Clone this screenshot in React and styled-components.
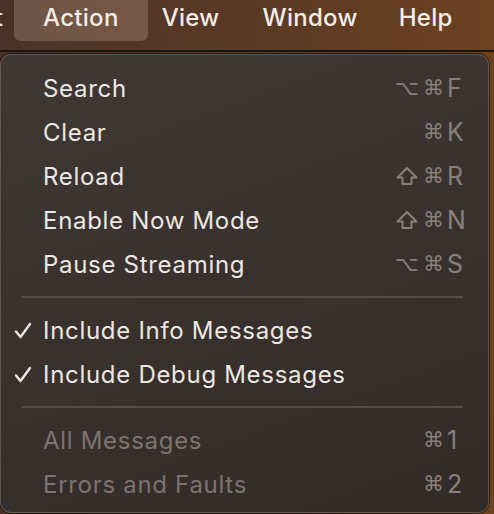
import styled, { createGlobalStyle } from "styled-components";

const GlobalStyle = createGlobalStyle`
  html, body {
    margin: 0;
    padding: 0;
  }
  body {
    width: 494px;
    height: 514px;
    overflow: hidden;
    background: linear-gradient(90deg, #4a3326 0%, #5a3a25 50%, #6d4221 100%);
    font-family: Inter, "Noto Sans", "Liberation Sans", sans-serif;
    -webkit-font-smoothing: antialiased;
  }
`;

const Page = styled.div`
  display: flex;
  flex-direction: column;
  width: 494px;
  height: 514px;
`;

const MenuBar = styled.nav`
  display: flex;
  align-items: flex-start;
  height: 52px;
  border-bottom: 2px solid #1c1512;
  box-sizing: border-box;
`;

const BarItem = styled.div`
  display: flex;
  align-items: center;
  height: 41px;
  padding: 0 ${(p) => p.pad || 22}px 7px;
  box-sizing: border-box;
  margin-left: ${(p) => p.offset || 0}px;
  border-radius: 0 0 7px 7px;
  background: ${(p) => (p.active ? "rgba(190, 160, 140, 0.32)" : "transparent")};
  color: #f1ece8;
  font-size: 24px;
  font-weight: 500;
  letter-spacing: 0.3px;
  white-space: nowrap;
`;

const Stub = styled.div`
  width: 14px;
  height: 41px;
  padding: 0 11px 7px 0;
  box-sizing: border-box;
  overflow: hidden;
  display: flex;
  align-items: center;
  justify-content: flex-end;
  color: #f1ece8;
  font-size: 24px;
  font-weight: 500;
`;

const Menu = styled.div`
  margin: 2px 5px 1px 0;
  flex: 1;
  display: flex;
  flex-direction: column;
  padding: 11px 0 6px;
  border-radius: 11px;
  background: linear-gradient(160deg, #403834 0%, #3a322e 45%, #332b27 100%);
  border: 1px solid rgba(255, 255, 255, 0.18);
  box-shadow: 0 0 0 1px rgba(0, 0, 0, 0.55);
`;

const Row = styled.div`
  display: grid;
  grid-template-columns: 42px 1fr auto;
  align-items: center;
  height: 44px;
  padding-right: 22px;
  color: ${(p) => (p.disabled ? "#7b7470" : "#ebe7e3")};
  font-size: 24px;
  font-weight: 400;
  letter-spacing: 0.7px;
`;

const Check = styled.span`
  display: flex;
  justify-content: flex-end;
  padding-right: 11px;
  svg {
    display: block;
  }
`;

const Shortcut = styled.span`
  display: flex;
  align-items: center;
  color: #87807c;
  color: #87807c;
  font-family: "DejaVu Sans", Inter, sans-serif;
  font-size: 21px;
  letter-spacing: 0;
`;

const Mod = styled.span`
  width: 27px;
  display: flex;
  justify-content: center;
  svg {
    display: block;
  }
`;

const Key = styled.span`
  width: 19px;
  font-family: Inter, "Noto Sans", sans-serif;
  font-size: 25px;
  text-align: left;
`;

const Separator = styled.div`
  height: 22px;
  display: flex;
  align-items: center;
  padding: 0 25px 0 21px;
  &::after {
    content: "";
    flex: 1;
    height: 2px;
    background: #554d49;
  }
`;

const CheckIcon = () => (
  <svg width="18" height="17" viewBox="0 0 18 17">
    <path
      d="M2 9.5 L6.5 15 L16 2"
      fill="none"
      stroke="#ebe7e3"
      strokeWidth="2.4"
      strokeLinecap="round"
      strokeLinejoin="round"
    />
  </svg>
);

const ShiftIcon = () => (
  <svg width="22" height="20" viewBox="0 0 22 20">
    <path
      d="M11 2 L20.5 11.5 H15.5 V18 H6.5 V11.5 H1.5 Z"
      fill="none"
      stroke="#87807c"
      strokeWidth="2"
      strokeLinejoin="round"
    />
  </svg>
);

const sections = [
  [
    { label: "Search", mods: ["⌥", "⌘"], key: "F" },
    { label: "Clear", mods: ["⌘"], key: "K" },
    { label: "Reload", mods: ["shift", "⌘"], key: "R" },
    { label: "Enable Now Mode", mods: ["shift", "⌘"], key: "N" },
    { label: "Pause Streaming", mods: ["⌥", "⌘"], key: "S" },
  ],
  [
    { label: "Include Info Messages", checked: true },
    { label: "Include Debug Messages", checked: true },
  ],
  [
    { label: "All Messages", mods: ["⌘"], key: "1", disabled: true },
    { label: "Errors and Faults", mods: ["⌘"], key: "2", disabled: true },
  ],
];

function App() {
  return (
    <>
      <GlobalStyle />
      <Page>
        <MenuBar>
          <Stub>t</Stub>
          <BarItem active pad={29}>Action</BarItem>
          <BarItem pad={22} offset={-8}>View</BarItem>
          <BarItem pad={21}>Window</BarItem>
          <BarItem pad={20}>Help</BarItem>
        </MenuBar>
        <Menu>
          {sections.map((items, i) => (
            <div key={i}>
              {i > 0 && <Separator />}
              {items.map((item) => (
                <Row key={item.label} disabled={item.disabled}>
                  <Check>{item.checked && <CheckIcon />}</Check>
                  <span>{item.label}</span>
                  {item.key ? (
                    <Shortcut>
                      {item.mods.map((m, j) => (
                        <Mod key={j}>{m === "shift" ? <ShiftIcon /> : m}</Mod>
                      ))}
                      <Key>{item.key}</Key>
                    </Shortcut>
                  ) : (
                    <span />
                  )}
                </Row>
              ))}
            </div>
          ))}
        </Menu>
      </Page>
    </>
  );
}

export default App;
